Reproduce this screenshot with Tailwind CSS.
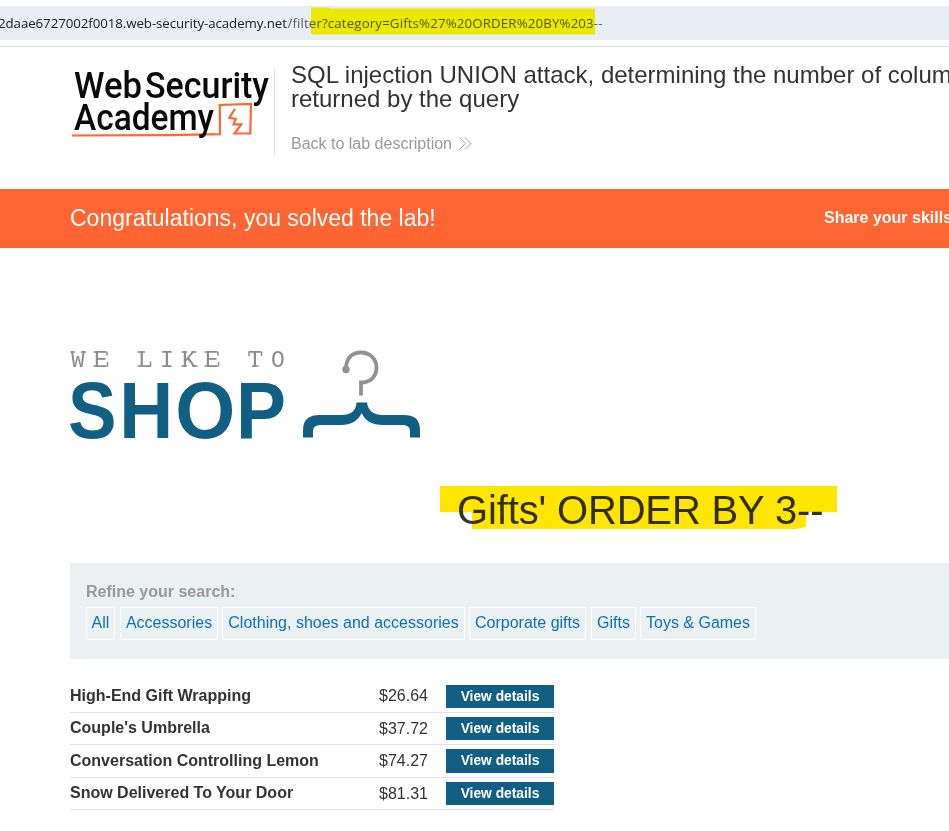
<!DOCTYPE html>
<html lang="en">
<head>
<meta charset="utf-8">
<title>SQL injection UNION attack</title>
<script src="https://cdn.jsdelivr.net/npm/@tailwindcss/browser@4"></script>
</head>
<body class="w-[949px] h-[831px] overflow-hidden bg-white text-[#333332] font-['Liberation_Sans',Arial,sans-serif]">
<div class="relative h-[47px] pt-[6px] border-b border-[#dcdde0]">
  <div class="h-[34px] bg-[#e9edf5] flex items-center">
    <svg class="block w-[620px] h-[34px] overflow-visible" viewBox="0 0 620 34" font-family="'Open Sans','Noto Sans',sans-serif" font-size="13.3">
      <text x="-2" y="22" textLength="289" fill="#202124">2daae6727002f0018.web-security-academy.net</text>
      <text x="287.5" y="22" textLength="315" fill="#5a5d62">/filter?category=Gifts%27%20ORDER%20BY%203--</text>
    </svg>
  </div>
  <svg class="absolute left-[310px] top-[6px] w-[286px] h-[30px] mix-blend-multiply" viewBox="0 0 286 30"><path d="M1 1.500H18L21 2.500H285V28.500H2L1 27Z" fill="#fffa00"/></svg>
</div>

<header class="h-[142px] flex">
  <svg class="block w-[274px] h-[108px] shrink-0" viewBox="0 47 274 108">
    <g font-family="Roboto,sans-serif" font-weight="500" font-size="37.500" fill="#0a0a0a">
      <text x="74" y="97.500" textLength="68" lengthAdjust="spacingAndGlyphs">Web</text>
      <text x="145" y="97.500" textLength="124" lengthAdjust="spacingAndGlyphs">Security</text>
    </g>
    <path d="M72 135.500L168 135.200L220 134.200L219.800 105L251 104L250.300 133.500L234.500 133.500L241.300 124.300L233.500 124.300L235.700 119L229.300 117.700L235 109" fill="none" stroke="#ff6633" stroke-width="2.200"/>
    <text x="74" y="129.500" font-family="Roboto,sans-serif" font-weight="500" font-size="36.500" fill="#0a0a0a" textLength="140" lengthAdjust="spacingAndGlyphs">Academy</text>
  </svg>
  <div class="mt-[22px] h-[86px] pl-4 border-l border-[#e0e0e0]">
    <h2 class="-mt-[6px] text-[24px] leading-[24px] whitespace-nowrap">SQL injection UNION attack, determining the number of columns<br>returned by the query</h2>
    <a class="mt-[21px] flex items-center text-[16px] leading-[24px] text-[#999]">Back to lab description
      <svg class="ml-[7px] -mt-px w-[13px] h-[13px]" viewBox="0 0 13 13" fill="none" stroke="#999" stroke-width=".9"><path d="M.5.500L6.500 6.500L.5 12.500M6 .5L12 6.500L6 12.500"/></svg>
    </a>
  </div>
</header>

<section class="h-[59px] bg-[#ff6633] text-white flex items-center justify-between pl-[70px] overflow-hidden whitespace-nowrap">
  <h4 class="text-[23px]">Congratulations, you solved the lab!</h4>
  <span class="-mt-[2px] w-[125px] text-[16px] font-bold">Share your skills!</span>
</section>

<main class="pl-[70px]">
  <svg class="block mt-[92px] w-[360px] h-[110px]" viewBox="70 340 360 110">
    <text x="71 94 138 160 182 205 248 271" y="366.500" font-family="'Liberation Mono','Courier New',monospace" font-size="23" fill="#8c8c8c">WELIKETO</text>
    <path d="M70.500 352H75M81 352H86M93.500 352H97M93.500 366H97M107 351.500V355.500M107.500 362V366.500M137.500 352H145M137.500 366H141M150.500 361.500V366.500M181.500 352H187M181.500 366H187M191.500 352H196.500M192 366H197.500M204.500 352H208M204.500 366H208M218 351.500V355.500M218.500 362V366.500M249 351.500V356M261.500 351.500V356M252 366H258.500" stroke="#8c8c8c" stroke-width="1.500"/>
    <text y="437.500" font-family="'Liberation Sans',Arial,sans-serif" font-weight="700" font-size="80" fill="#125f84"><tspan x="68" textLength="48.500" lengthAdjust="spacingAndGlyphs">S</tspan><tspan x="119.300" textLength="54" lengthAdjust="spacingAndGlyphs">H</tspan><tspan x="175.300" textLength="60" lengthAdjust="spacingAndGlyphs">O</tspan><tspan x="236" textLength="50" lengthAdjust="spacingAndGlyphs">P</tspan></text>
    <path d="M346 369C346 358 352 352.500 361 352.500C370 352.500 376.500 359 376.500 367.500C376.500 377 370 382.500 361 382.500V395.500" fill="none" stroke="#919191" stroke-width="3.800"/>
    <circle cx="346" cy="369.500" r="3.700" fill="#919191"/>
    <path d="M356.500 402.500H367C368 411 374 415 383 415H403C415 415 420 419 420 431V437.500H410V432C410 427 408 425 402 425H383C372 425 365 421 361.700 413C358 421 351 425 341 425H322C315 425 313 427 313 432V437.500H303V431C303 419 309 415 320 415H341C351 415 356 411 356.500 402.500Z" fill="#125f84"/>
  </svg>
  <div class="relative h-[113px]">
    <h1 class="pl-[387px] pt-[37px] text-[40px] leading-[46px] whitespace-nowrap"><span class="tracking-[-0.15px]">Gifts' ORDER BY 3--</span></h1>
    <svg class="absolute left-[370px] top-[36px] w-[398px] h-[44px] mix-blend-multiply" viewBox="0 0 398 44"><path d="M0 0H397V26H366V41L356 43H32V26H0Z" fill="#ffe600"/></svg>
  </div>
  <section class="h-[96px] bg-[#ebf0f2] pl-4 pt-[17px]">
    <label class="block text-[16px] leading-[24px] font-bold text-[#999]">Refine your search:</label>
    <div class="mt-[3px] flex gap-[5px] text-[16px] text-[#0b70b7] whitespace-nowrap">
      <a class="flex h-[33px] w-[29px] justify-center border border-white pt-[3px]">All</a>
      <a class="flex h-[33px] w-[98px] justify-center border border-white pt-[3px]">Accessories</a>
      <a class="-ml-px flex h-[33px] w-[243px] justify-center border border-white pt-[3px]">Clothing, shoes and accessories</a>
      <a class="-ml-px flex h-[33px] w-[117px] justify-center border border-white pt-[3px]">Corporate gifts</a>
      <a class="flex h-[33px] w-[45px] justify-center border border-white pt-[3px]">Gifts</a>
      <a class="-ml-px flex h-[33px] w-[116px] justify-center border border-white pt-[3px]">Toys &amp; Games</a>
    </div>
  </section>
  <table class="mt-[21px] w-[484px] table-fixed border-collapse text-[16px] leading-[24px]">
    <colgroup><col class="w-[309px]"><col class="w-[67px]"><col class="w-[108px]"></colgroup>
    <tbody>
      <tr class="h-[32px] border-b border-[#e3e3e3]"><th class="p-0 text-left"><div class="mt-px">High-End Gift Wrapping</div></th><td class="p-0">$26.64</td><td class="p-0"><a class="mt-px block h-[23px] bg-[#125f84] text-center text-[13.800px] leading-[23px] font-bold text-white">View details</a></td></tr>
      <tr class="h-[32px] border-b border-[#e3e3e3]"><th class="p-0 text-left"><div class="-mt-px">Couple's Umbrella</div></th><td class="p-0"><div class="pt-px">$37.72</div></td><td class="p-0"><a class="block h-[23px] bg-[#125f84] text-center text-[13.800px] leading-[23px] font-bold text-white">View details</a></td></tr>
      <tr class="h-[33px] border-b border-[#e3e3e3]"><th class="p-0 text-left"><div class="mt-px">Conversation Controlling Lemon</div></th><td class="p-0">$74.27</td><td class="p-0"><a class="block h-[24px] bg-[#125f84] text-center text-[13.800px] leading-[23px] font-bold text-white">View details</a></td></tr>
      <tr class="h-[32px] border-b border-[#e3e3e3]"><th class="p-0 text-left"><div class="-mt-px">Snow Delivered To Your Door</div></th><td class="p-0"><div class="pt-px">$81.31</div></td><td class="p-0"><a class="block h-[23px] bg-[#125f84] text-center text-[13.800px] leading-[23px] font-bold text-white">View details</a></td></tr>
    </tbody>
  </table>
</main>
</body>
</html>
